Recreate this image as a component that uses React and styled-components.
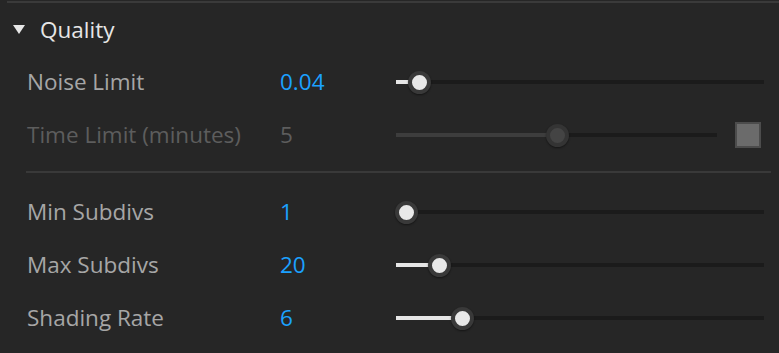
import styled, { createGlobalStyle } from "styled-components";

const GlobalStyle = createGlobalStyle`
  html, body {
    margin: 0;
    padding: 0;
    background: #262626;
  }
  body {
    font-family: "Open Sans", "Noto Sans", sans-serif;
  }
`;

const Panel = styled.div`
  width: 779px;
  height: 353px;
  background: #262626;
  overflow: hidden;
  padding-top: 1px;
  box-sizing: border-box;
`;

const TopRule = styled.div`
  height: 2px;
  margin-left: 7px;
  background: #3a3a3a;
`;

const Header = styled.div`
  height: 52px;
  display: flex;
  align-items: center;
  padding-left: 13px;
  gap: 15px;
  color: #e6e6e6;
  font-size: 22.5px;
`;

const Caret = styled.span`
  width: 0;
  height: 0;
  border-left: 6px solid transparent;
  border-right: 6px solid transparent;
  border-top: 9px solid #e6e6e6;
  margin-top: 1px;
`;

const Row = styled.div`
  height: 53px;
  display: grid;
  grid-template-columns: 253px 116px 1fr;
  align-items: center;
  padding: 0 15px 0 27px;
  font-size: 22.5px;
`;

const Label = styled.span`
  color: ${(p) => (p.disabled ? "#5d5d5d" : "#a6a6a6")};
`;

const Value = styled.span`
  color: ${(p) => (p.disabled ? "#5d5d5d" : "#1ba1ff")};
`;

const SliderCell = styled.div`
  display: flex;
  align-items: center;
  gap: 18px;
`;

const Track = styled.div`
  position: relative;
  flex: 1;
  height: 4px;
  background: #1b1b1b;
`;

const Fill = styled.div`
  height: 100%;
  background: ${(p) => (p.disabled ? "#3d3d3d" : "#e6e6e6")};
`;

const Thumb = styled.div`
  position: absolute;
  top: 50%;
  width: 15px;
  height: 15px;
  margin: -11px 0 0 -11px;
  border-radius: 50%;
  border: 4px solid ${(p) => (p.disabled ? "#343434" : "#393939")};
  background: ${(p) => (p.disabled ? "#444444" : "#e8e8e8")};
  box-shadow: 0 1px 2px rgba(0, 0, 0, 0.45);
`;

const Check = styled.div`
  width: 22px;
  height: 22px;
  border: 2px solid #4c4c4c;
  background: #6b6b6b;
  margin-right: 3px;
`;

const Separator = styled.div`
  height: 2px;
  margin: 10px 8px 12px 26px;
  background: #393939;
`;

const Slider = ({ pct, disabled }) => (
  <Track>
    <Fill disabled={disabled} style={{ width: `calc(10px + ${pct}% - ${pct * 0.2}px)` }} />
    <Thumb disabled={disabled} style={{ left: `calc(10px + ${pct}% - ${pct * 0.2}px)` }} />
  </Track>
);

const SettingRow = ({ label, value, pct, disabled, checkbox }) => (
  <Row>
    <Label disabled={disabled}>{label}</Label>
    <Value disabled={disabled}>{value}</Value>
    <SliderCell>
      <Slider pct={pct} disabled={disabled} />
      {checkbox && <Check />}
    </SliderCell>
  </Row>
);

const App = () => (
  <Panel>
    <GlobalStyle />
    <TopRule />
    <Header>
      <Caret />
      <span>Quality</span>
    </Header>
    <SettingRow label="Noise Limit" value="0.04" pct={3.7} />
    <SettingRow label="Time Limit (minutes)" value="5" pct={50} disabled checkbox />
    <Separator />
    <SettingRow label="Min Subdivs" value="1" pct={0} />
    <SettingRow label="Max Subdivs" value="20" pct={9.5} />
    <SettingRow label="Shading Rate" value="6" pct={16} />
  </Panel>
);

export default App;
